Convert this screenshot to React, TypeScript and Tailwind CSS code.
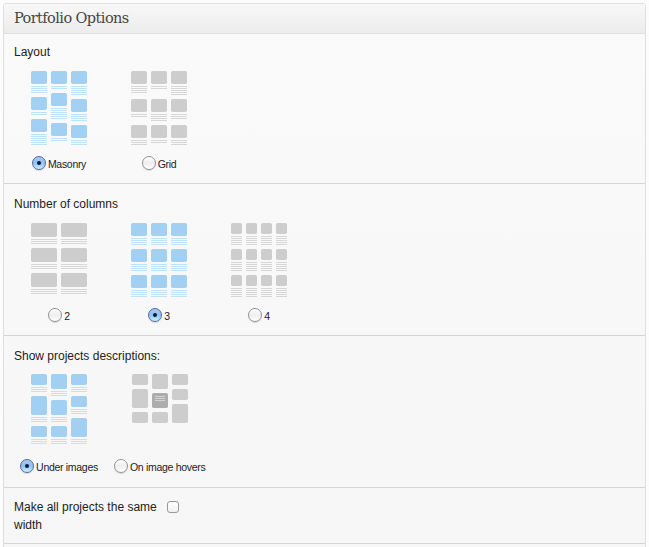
import React from 'react';

type Tile = { x: number; y: number; w: number; h: number; lines: number; gap?: number; dark?: boolean };

const col = (x: number, w: number, items: [number, number, number][]): Tile[] =>
  items.map(([y, h, lines]) => ({ x, y, w, h, lines }));

const masonry: Tile[] = [
  ...col(0, 16, [[0, 13, 4], [26, 13, 2], [48, 13, 6]]),
  ...col(20, 16, [[0, 13, 2], [22, 13, 6], [52, 13, 2]]),
  ...col(40, 16, [[0, 13, 5], [28, 13, 4], [54, 13, 3]]),
];
const grid: Tile[] = [
  ...col(0, 16, [[0, 13, 4], [28, 13, 2], [54, 13, 3]]),
  ...col(20, 16, [[0, 13, 2], [28, 13, 4], [54, 13, 2]]),
  ...col(40, 16, [[0, 13, 5], [28, 13, 3], [54, 13, 3]]),
];
const twoCols: Tile[] = [0, 30].flatMap((x) => col(x, 26, [[0, 14, 3], [25, 14, 3], [50, 14, 3]]));
const threeCols: Tile[] = [0, 20, 40].flatMap((x) => col(x, 16, [[0, 13, 4], [26, 13, 4], [52, 13, 4]]));
const fourCols: Tile[] = [0, 15, 30, 45].flatMap((x) => col(x, 11, [[0, 11, 5], [26, 11, 5], [52, 11, 5]]));
const under: Tile[] = [
  ...col(0, 16, [[0, 11, 3], [22, 19, 3], [52, 11, 3]]),
  ...col(20, 16, [[0, 15, 3], [26, 15, 3], [52, 11, 3]]),
  ...col(40, 16, [[0, 11, 3], [22, 11, 3], [44, 19, 3]]),
];
const hover: Tile[] = [
  ...col(1, 16, [[0, 11, 0], [15, 19, 0], [38, 11, 0]]),
  ...col(21, 16, [[0, 15, 0], [38, 11, 0]]),
  { x: 21, y: 19, w: 16, h: 15, lines: 0, dark: true },
  ...col(41, 16, [[0, 11, 0], [15, 11, 0], [30, 19, 0]]),
];

function Thumb({ tiles, active }: { tiles: Tile[]; active?: boolean }) {
  return (
    <svg width="58" height="76" viewBox="0 0 58 76" className="block shrink-0">
      {tiles.map((t, i) => (
        <g key={i}>
          <rect x={t.x} y={t.y} width={t.w} height={t.h} rx="1.8" fill={t.dark ? '#adadad' : active ? '#a2d0f2' : '#cdcdcd'} />
          {Array.from({ length: t.lines }, (_, n) => (
            <rect key={n} x={t.x} y={t.y + t.h + 2 + n * 2} width={t.w} height="1" fill={active ? '#bfe2f8' : '#d6d6d6'} />
          ))}
          {t.dark &&
            [3, 5, 7].map((n) => <rect key={n} x={t.x + 3} y={t.y + n} width="10" height="1" fill="#d2d2d2" />)}
        </g>
      ))}
    </svg>
  );
}

function Radio({ checked }: { checked?: boolean }) {
  return (
    <span
      className={
        checked
          ? 'flex size-[14px] shrink-0 items-center justify-center rounded-full border border-[#56699b] bg-linear-to-b from-[#a9c8f0] via-[#8fc0f2] to-[#c9f1ff] shadow-[0_1px_1px_#0002]'
          : 'flex size-[14px] shrink-0 items-center justify-center rounded-full border border-[#929292] bg-linear-to-b from-white via-[#eeeeee] to-white shadow-[0_1px_1px_#0002]'
      }
    >
      {checked && <span className="size-1 rounded-full bg-[#0b1a33]" />}
    </span>
  );
}

function Option({ tiles, label, checked }: { tiles: Tile[]; label: string; checked?: boolean }) {
  return (
    <label className="flex w-[100px] shrink-0 flex-col">
      <span className="pl-[17px]"><Thumb tiles={tiles} active={checked} /></span>
      <span className="mt-2 flex h-4 w-[90px] items-center justify-center-safe gap-[2px] text-[10.5px] tracking-[-0.3px] whitespace-nowrap text-[#222]">
        <Radio checked={checked} />
        <span className="pt-[3px]">{label}</span>
      </span>
    </label>
  );
}

function Section({ title, className, children }: { title: string; className: string; children: React.ReactNode }) {
  return (
    <section className={`border-b border-[#d5d5d5] pl-[10px] ${className}`}>
      <h3 className="text-[12px] leading-4 text-[#222]">{title}</h3>
      {children}
    </section>
  );
}

export default function App() {
  return (
    <main className="h-[547px] w-[649px] overflow-hidden bg-[#fcfcfc] pt-[3px] pl-[3px] font-['Liberation_Sans',Arial,sans-serif]">
      <div className="h-[560px] w-[643px] overflow-hidden rounded-[3px] border border-[#dfdfdf] bg-linear-to-b from-[#fafafa] to-[#f6f6f6]">
        <h2 className="flex h-[30px] items-center border-b border-[#dfdfdf] bg-linear-to-b from-[#f8f8f8] to-[#ececec] pl-[10px] font-['DejaVu_Serif',Georgia,serif] text-[14.5px] tracking-[-0.58px] text-[#464646]">
          Portfolio Options
        </h2>
        <Section title="Layout" className="h-[150px] pt-[10px]">
          <div className="mt-[11px] flex">
            <Option tiles={masonry} label="Masonry" checked />
            <Option tiles={grid} label="Grid" />
          </div>
        </Section>
        <Section title="Number of columns" className="h-[152px] pt-3">
          <div className="mt-[11px] flex">
            <Option tiles={twoCols} label="2" />
            <Option tiles={threeCols} label="3" checked />
            <Option tiles={fourCols} label="4" />
          </div>
        </Section>
        <Section title="Show projects descriptions:" className="h-[152px] pt-3">
          <div className="mt-[10px] flex">
            <Option tiles={under} label="Under images" checked />
            <Option tiles={hover} label="On image hovers" />
          </div>
        </Section>
        <section className="flex h-14 border-b border-[#d5d5d5] pt-[10px] pl-[10px]">
          <p className="w-[153px] text-[12px] leading-[18px] text-[#222]">Make all projects the same width</p>
          <span className="mt-[3px] size-3 rounded-[3px] border border-[#999] bg-linear-to-b from-white to-[#f0f0f0]" />
        </section>
      </div>
    </main>
  );
}
